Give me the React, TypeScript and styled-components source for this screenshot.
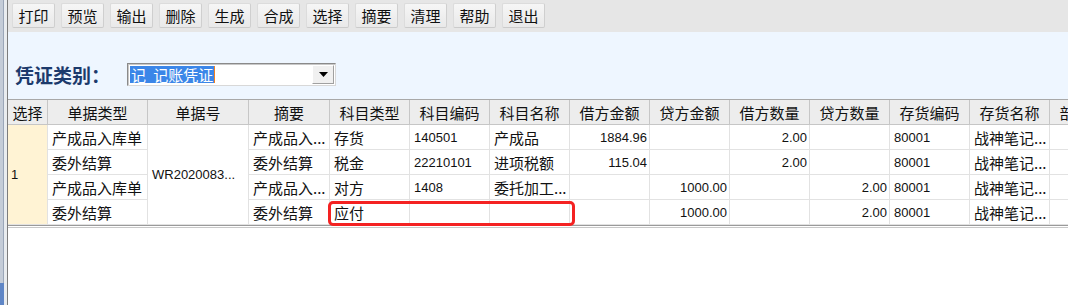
import styled, { createGlobalStyle } from "styled-components";

const GlobalStyle = createGlobalStyle`
    html, body {
        margin: 0;
        padding: 0;
        background: #ffffff;
    }
    body {
        font-family: "Liberation Sans", "Noto Sans CJK SC", sans-serif;
        color: #000;
    }
`;

const tools = ["打印", "预览", "输出", "删除", "生成", "合成", "选择", "摘要", "清理", "帮助", "退出"];

const headers = [
    "选择", "单据类型", "单据号", "摘要", "科目类型", "科目编码", "科目名称",
    "借方金额", "贷方金额", "借方数量", "贷方数量", "存货编码", "存货名称", "部门编码",
];

type Row = {
    type: string;
    memo: string;
    kind: string;
    code: string;
    name: string;
    debit: string;
    credit: string;
    debitQty: string;
    creditQty: string;
    stockCode: string;
    stockName: string;
};

const rows: Row[] = [
    { type: "产成品入库单", memo: "产成品入...", kind: "存货", code: "140501", name: "产成品", debit: "1884.96", credit: "", debitQty: "2.00", creditQty: "", stockCode: "80001", stockName: "战神笔记..." },
    { type: "委外结算", memo: "委外结算", kind: "税金", code: "22210101", name: "进项税额", debit: "115.04", credit: "", debitQty: "2.00", creditQty: "", stockCode: "80001", stockName: "战神笔记..." },
    { type: "产成品入库单", memo: "产成品入...", kind: "对方", code: "1408", name: "委托加工...", debit: "", credit: "1000.00", debitQty: "", creditQty: "2.00", stockCode: "80001", stockName: "战神笔记..." },
    { type: "委外结算", memo: "委外结算", kind: "应付", code: "", name: "", debit: "", credit: "1000.00", debitQty: "", creditQty: "2.00", stockCode: "80001", stockName: "战神笔记..." },
];

export default function App() {
    return (
        <>
            <GlobalStyle />
            <Frame>
                <WindowEdge />
                <Main>
                    <Toolbar>
                        {tools.map((t) => (
                            <ToolButton key={t}>{t}</ToolButton>
                        ))}
                    </Toolbar>
                    <FilterPanel>
                        <Label>凭证类别：</Label>
                        <Combo>
                            <ComboText>
                                <Selected>记 记账凭证</Selected>
                                <Caret />
                            </ComboText>
                            <DropButton>
                                <svg width="9" height="5" viewBox="0 0 9 5">
                                    <path d="M0 0h9L4.5 5z" fill="#000" />
                                </svg>
                            </DropButton>
                        </Combo>
                    </FilterPanel>
                    <GridArea>
                        <Grid>
                            {headers.map((h) => (
                                <HeadCell key={h}>{h}</HeadCell>
                            ))}
                            <SelectCell>1</SelectCell>
                            <NoCell>WR2020083...</NoCell>
                            {rows.map((r, i) => (
                                <RowCells key={i} row={r} line={i + 2} />
                            ))}
                            <Highlight />
                        </Grid>
                        <GridBottom />
                    </GridArea>
                </Main>
            </Frame>
        </>
    );
}

function RowCells({ row, line }: { row: Row; line: number }) {
    return (
        <>
            <Cell style={{ gridRow: line, gridColumn: 2 }}>{row.type}</Cell>
            <Cell style={{ gridRow: line, gridColumn: 4 }}>{row.memo}</Cell>
            <Cell>{row.kind}</Cell>
            <Cell $num>{row.code}</Cell>
            <Cell>{row.name}</Cell>
            <Cell $num $right>{row.debit}</Cell>
            <Cell $num $right>{row.credit}</Cell>
            <Cell $num $right>{row.debitQty}</Cell>
            <Cell $num $right>{row.creditQty}</Cell>
            <Cell $num>{row.stockCode}</Cell>
            <Cell>{row.stockName}</Cell>
            <Cell />
        </>
    );
}

const Frame = styled.div`
    width: 1068px;
    height: 305px;
    display: flex;
    overflow: hidden;
    background: #ffffff;
`;

const WindowEdge = styled.div`
    width: 7px;
    flex-shrink: 0;
    border-right: 1px solid #7c7c7c;
    background: linear-gradient(to right, #c4ccd8 0 3px, #9aa6b8 3px 4px, #e9ecef 4px 7px);
    position: relative;
    &::after {
        content: "";
        position: absolute;
        left: 0;
        bottom: 0;
        width: 4px;
        height: 22px;
        background: #5f86c6;
    }
`;

const Main = styled.div`
    flex: 1;
    min-width: 0;
    display: flex;
    flex-direction: column;
`;

const Toolbar = styled.div`
    height: 32px;
    background: #e6e6e6;
    display: flex;
    align-items: center;
    gap: 6px;
    padding: 0 0 2px 4px;
    box-sizing: border-box;
`;

const ToolButton = styled.div`
    width: 43px;
    height: 25px;
    box-sizing: border-box;
    display: flex;
    align-items: center;
    justify-content: center;
    font-family: "Noto Sans CJK SC", sans-serif;
    font-size: 15px;
    color: #111;
    background: linear-gradient(to bottom, #f6f6f6, #e9e9e9);
    border: 1px solid #dcdcdc;
    border-right-color: #cfcfcf;
    border-bottom-color: #cbcbcb;
    border-radius: 2px;
`;

const FilterPanel = styled.div`
    height: 67px;
    background: #eef6ff;
    display: flex;
    align-items: flex-end;
    padding: 0 0 13px 7px;
    box-sizing: border-box;
`;

const Label = styled.div`
    width: 112px;
    height: 23px;
    display: flex;
    align-items: center;
    font-family: "Noto Sans CJK SC", sans-serif;
    font-size: 19px;
    font-weight: 700;
    color: #1c3a6c;
`;

const Combo = styled.div`
    width: 209px;
    height: 23px;
    box-sizing: border-box;
    display: flex;
    background: #ffffff;
    border: 1px solid #8a8a8a;
    border-right-color: #d8d8d8;
    border-bottom-color: #d8d8d8;
    box-shadow: inset 1px 1px 0 #c8c8c8;
`;

const ComboText = styled.div`
    flex: 1;
    display: flex;
    align-items: center;
    padding-left: 2px;
`;

const Selected = styled.span`
    background: #3b86e8;
    color: #ffffff;
    font-family: "Noto Sans CJK SC", sans-serif;
    font-size: 15px;
    line-height: 17px;
    word-spacing: 4px;
    padding: 0 1px;
`;

const Caret = styled.span`
    width: 1px;
    height: 17px;
    background: #f08020;
`;

const DropButton = styled.div`
    width: 20px;
    margin: 1px;
    display: flex;
    align-items: center;
    justify-content: center;
    background: #f0f0f0;
    border: 1px solid #ffffff;
    border-right-color: #a0a0a0;
    border-bottom-color: #a0a0a0;
`;

const GridArea = styled.div`
    flex: 1;
    border-top: 1px solid #a8a8a8;
`;

const Grid = styled.div`
    position: relative;
    display: grid;
    grid-template-columns: 40px 100px 101px 81px repeat(10, 80px);
    grid-template-rows: repeat(5, 25px);
    grid-auto-flow: row;
`;

const HeadCell = styled.div`
    box-sizing: border-box;
    display: flex;
    align-items: center;
    justify-content: center;
    white-space: nowrap;
    overflow: hidden;
    background: #ededed;
    border-right: 1px solid #c6c6c6;
    border-bottom: 1px solid #c6c6c6;
    font-family: "Noto Sans CJK SC", sans-serif;
    font-size: 15px;
    color: #111;
`;

const Cell = styled.div<{ $num?: boolean; $right?: boolean }>`
    box-sizing: border-box;
    display: flex;
    align-items: center;
    justify-content: ${(p) => (p.$right ? "flex-end" : "flex-start")};
    padding: ${(p) => (p.$right ? "0 2px 0 0" : "0 0 0 4px")};
    white-space: nowrap;
    overflow: hidden;
    background: #ffffff;
    border-right: 1px solid #e2e2e2;
    border-bottom: 1px solid #e2e2e2;
    font-family: ${(p) => (p.$num ? '"Liberation Sans", sans-serif' : '"Noto Sans CJK SC", sans-serif')};
    font-size: ${(p) => (p.$num ? "13px" : "15px")};
    color: #111;
`;

const SelectCell = styled(Cell)`
    grid-column: 1;
    grid-row: 2 / span 4;
    background: #fff3d4;
    padding-left: 3px;
    font-family: "Liberation Sans", sans-serif;
    font-size: 13px;
`;

const NoCell = styled(Cell)`
    grid-column: 3;
    grid-row: 2 / span 4;
    font-family: "Liberation Sans", sans-serif;
    font-size: 13px;
`;

const Highlight = styled.div`
    position: absolute;
    left: 320px;
    top: 101px;
    width: 247px;
    height: 25px;
    box-sizing: border-box;
    border: 3px solid #f42222;
    border-radius: 5px;
    pointer-events: none;
`;

const GridBottom = styled.div`
    height: 1px;
    border-top: 1px solid #9a9a9a;
    border-bottom: 1px solid #c8c8c8;
`;
